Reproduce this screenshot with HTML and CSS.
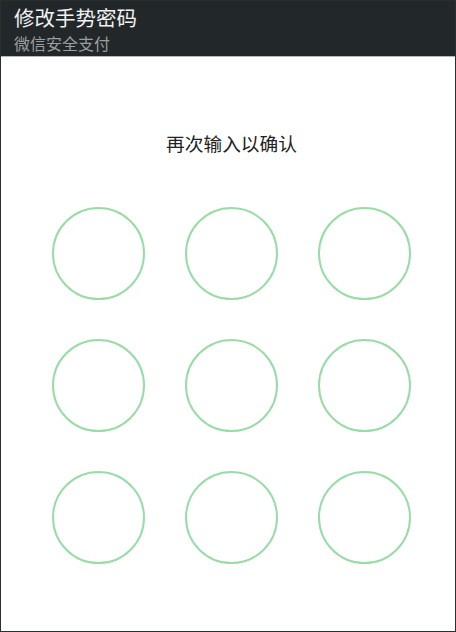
FILE: index.html
```html
<!DOCTYPE html>
<html lang="zh-CN">
<head>
    <meta charset="UTF-8">
    <meta name="viewport" content="width=device-width, initial-scale=1.0">
    <title>修改手势密码</title>
    <link rel="stylesheet" href="styles.css">
</head>
<body>
    <div class="page">
        <div class="header">
            <h1 class="title">修改手势密码</h1>
            <div class="subtitle">微信安全支付</div>
        </div>
        <div class="content">
            <p class="hint">再次输入以确认</p>
            <div class="pattern">
                <div class="dot"></div>
                <div class="dot"></div>
                <div class="dot"></div>
                <div class="dot"></div>
                <div class="dot"></div>
                <div class="dot"></div>
                <div class="dot"></div>
                <div class="dot"></div>
                <div class="dot"></div>
            </div>
        </div>
    </div>
</body>
</html>
```

FILE: styles.css
```css
* {
    box-sizing: border-box;
    margin: 0;
    padding: 0;
    font-family: 'Noto Sans CJK SC', 'Noto Sans', sans-serif;
}

body {
    background: #fff;
}

.page {
    width: 456px;
    height: 632px;
    border: 1px solid #2a2e30;
    overflow: hidden;
}

.header {
    height: 56px;
    background: #22282a;
    border-bottom: 1px solid #b8b8b8;
    padding: 1px 0 0 13px;
}

.title {
    font-size: 20.5px;
    font-weight: normal;
    line-height: 30px;
    color: #f2f2f2;
}

.subtitle {
    font-size: 16px;
    line-height: 23px;
    color: #9c9e9e;
}

.content {
    padding-left: 7px;
}

.hint {
    margin-top: 75px;
    text-align: center;
    font-size: 18.7px;
    line-height: 22px;
    color: #222;
}

.pattern {
    display: grid;
    grid-template-columns: repeat(3, 93px);
    column-gap: 40px;
    row-gap: 39px;
    justify-content: center;
    margin-top: 53px;
}

.dot {
    width: 93px;
    height: 93px;
    border: 2px solid #9adca9;
    border-radius: 50%;
}
```
